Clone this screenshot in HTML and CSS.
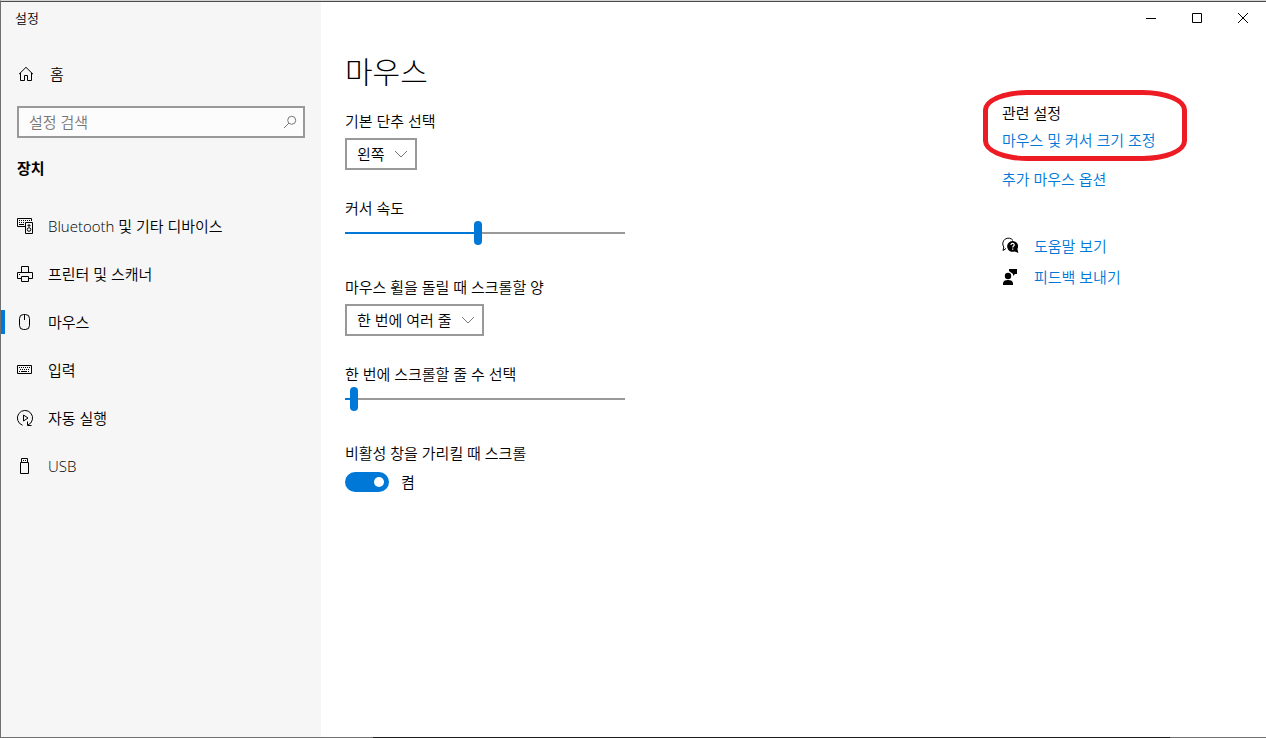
FILE: index.html
```html
<!DOCTYPE html>
<html lang="ko">
<head>
    <meta charset="UTF-8">
    <meta name="viewport" content="width=device-width, initial-scale=1">
    <title>설정</title>
    <link rel="stylesheet" href="styles.css">
</head>
<body>
    <div class="window">
        <div class="sidebar">
            <div class="app-title">설정</div>
            <a class="home" href="#home">
                <svg class="icon" width="18" height="18" viewBox="0 0 18 18"><path d="M2 9.2 9 2.3l7 6.9M3.5 8v7.5h4v-5h3v5h4V8"/></svg>
                홈
            </a>
            <form class="search">
                <input type="search" placeholder="설정 검색" aria-label="설정 검색">
                <button type="submit" aria-label="검색">
                    <svg class="icon" width="14" height="14" viewBox="0 0 14 14"><circle cx="8.7" cy="5.3" r="4"/><path d="M5.8 8.2 1 13"/></svg>
                </button>
            </form>
            <h2>장치</h2>
            <nav>
                <a href="#bluetooth">
                    <svg class="icon" width="18" height="18" viewBox="0 0 18 18"><path d="M9 9.500H1.500v-8h14V4M3 3.500h1m1 0h1m1 0h1m1 0h1m1 0h1m1 0h1M3 5.500h1m1 0h1m1 0h1M3 7.500h5M9.500 5.500h7v11h-7z"/><circle cx="13" cy="12.500" r="1.800"/><path d="M12 8h2v1h-2z"/></svg>
                    Bluetooth 및 기타 디바이스
                </a>
                <a href="#printers">
                    <svg class="icon" width="18" height="18" viewBox="0 0 18 18"><path d="M5.500 7.500v-6h7v6M5.500 13.500h-4v-6h15v6h-4M5.500 11.500h7v5h-7zM3 9.500h1"/></svg>
                    프린터 및 스캐너
                </a>
                <a class="active" href="#mouse" aria-current="page">
                    <svg class="icon" width="18" height="18" viewBox="0 0 18 18"><rect x="3.500" y="1.500" width="10" height="15" rx="4"/><path d="M8.500 2v5"/></svg>
                    마우스
                </a>
                <a href="#typing">
                    <svg class="icon" width="18" height="18" viewBox="0 0 18 18"><path d="M1.500 4.500h14v8h-14zM3 6.500h1m1 0h1m1 0h1m1 0h1m1 0h1m1 0h1M4 8.500h1m1 0h1m1 0h1m1 0h1m1 0h1M3 10.500h1m1 0h6m1 0h1"/></svg>
                    입력
                </a>
                <a href="#autoplay">
                    <svg class="icon" width="18" height="18" viewBox="0 0 18 18"><path d="M6.500 16.200a7.600 7.600 0 1 1 5.500-.2M15.500 16.500h-4v-4M7.500 6v6l4.500-3z"/></svg>
                    자동 실행
                </a>
                <a href="#usb">
                    <svg class="icon" width="18" height="18" viewBox="0 0 18 18"><path d="M5.500 5.500v-4h6v4M4.500 5.500h8v11h-8zM7 3.500h1m1 0h1"/></svg>
                    USB
                </a>
            </nav>
        </div>

        <div class="page">
            <div class="window-controls">
                <button type="button" aria-label="최소화"><svg class="icon" width="12" height="12" viewBox="0 0 12 12"><path d="M1 6.500h10"/></svg></button>
                <button type="button" aria-label="최대화"><svg class="icon" width="12" height="12" viewBox="0 0 12 12"><path d="M1.500 1.500h9v9h-9z"/></svg></button>
                <button type="button" aria-label="닫기"><svg class="icon" width="12" height="12" viewBox="0 0 12 12"><path d="m1 1 10 10M11 1 1 11"/></svg></button>
            </div>

            <div class="content">
                <main>
                    <h1>마우스</h1>

                    <div class="field">
                        <label for="primary">기본 단추 선택</label>
                        <div class="select">
                            <select id="primary"><option>왼쪽</option></select>
                            <svg class="icon" width="14" height="8" viewBox="0 0 14 8"><path d="m1 1 6 6 6-6"/></svg>
                        </div>
                    </div>

                    <div class="field">
                        <label for="speed">커서 속도</label>
                        <input type="range" id="speed" min="1" max="20" value="10" style="--fill: 47%">
                    </div>

                    <div class="field">
                        <label for="wheel">마우스 휠을 돌릴 때 스크롤할 양</label>
                        <div class="select">
                            <select id="wheel"><option>한 번에 여러 줄</option></select>
                            <svg class="icon" width="14" height="8" viewBox="0 0 14 8"><path d="m1 1 6 6 6-6"/></svg>
                        </div>
                    </div>

                    <div class="field">
                        <label for="lines">한 번에 스크롤할 줄 수 선택</label>
                        <input type="range" id="lines" min="1" max="100" value="3" style="--fill: 3%">
                    </div>

                    <div class="field">
                        <label for="inactive">비활성 창을 가리킬 때 스크롤</label>
                        <div class="toggle">
                            <input type="checkbox" id="inactive" role="switch" checked>
                            <span>켬</span>
                        </div>
                    </div>
                </main>

                <aside>
                    <div class="related">
                        <h3>관련 설정</h3>
                        <a href="#cursor-size">마우스 및 커서 크기 조정</a>
                    </div>
                    <a href="#more">추가 마우스 옵션</a>
                    <div class="support">
                        <a href="#help">
                            <svg width="18" height="18" viewBox="0 0 18 18"><path d="M4 11.500 1 13.500 1.800 10A5.300 5.300 0 1 1 11 3.500" fill="none" stroke="#000"/><path d="M10.600 4a5.400 5.400 0 0 1 4.800 8l1 4-3.800-1.600A5.400 5.400 0 1 1 10.600 4z"/><path d="M9 8c0-2.200 3.400-2 3.200.1-.1 1-1.500 1-1.500 2.400m0 1v1.200" fill="none" stroke="#fff" stroke-width="1.200"/></svg>
                            도움말 보기
                        </a>
                        <a href="#feedback">
                            <svg width="18" height="18" viewBox="0 0 18 18"><circle cx="6" cy="8" r="3.200"/><path d="M1 17v-1.500C1 13 3 12 6 12s5 1 5 3.500V17zM7 1h8v5h-2l-2 2V6L7 3z"/></svg>
                            피드백 보내기
                        </a>
                    </div>
                </aside>
            </div>
        </div>
    </div>
</body>
</html>
```
FILE: styles.css
```css
* { box-sizing: border-box; }

body {
    margin: 0;
    background: #fff;
    color: #000;
    font: 350 15px/20px "Open Sans", "Noto Sans CJK KR", sans-serif;
}

h1, h2, h3 { margin: 0; }

a {
    color: #0078d7;
    text-decoration: none;
}

button, input, select {
    font: inherit;
    color: inherit;
}

button {
    padding: 0;
    border: 0;
    background: none;
}

.icon {
    flex: none;
    fill: none;
    stroke: currentColor;
}

.window {
    display: flex;
    min-height: 100vh;
    padding-bottom: 1px;
    border-top: 1px solid #d4d4d4;
    border-left: 1px solid #707070;
    background: linear-gradient(to right, #707070 29.4%, #1c1c1c 29.4%, #1c1c1c 92.4%, #707070 92.4%) bottom / 100% 1px no-repeat;
}

/* left column */
.sidebar {
    flex: none;
    width: 320px;
    border-top: 1px solid #4c4c4c;
    background: #f6f6f6;
}

.app-title {
    padding: 6px 14px;
    font-size: 13px;
}

.home {
    display: flex;
    align-items: center;
    gap: 15px;
    margin-top: 20px;
    padding: 10px 16px;
    color: #000;
}

.search {
    display: flex;
    align-items: center;
    height: 32px;
    margin: 12px 16px 20px;
    border: 2px solid #999;
    background: #fcfcfc;
    color: #767676;
}

.search input {
    flex: 1;
    min-width: 0;
    padding: 0 10px;
    border: 0;
    background: none;
}

.search input::placeholder { color: #767676; }

.search button {
    display: flex;
    padding: 6px;
}

.sidebar h2 {
    padding: 0 16px;
    font-size: 15px;
}

nav { margin-top: 24px; }

nav a {
    display: flex;
    align-items: center;
    gap: 14px;
    height: 48px;
    padding-left: 15px;
    color: #000;
}

nav .active {
    background: linear-gradient(#0078d7, #0078d7) left center / 4px 24px no-repeat;
}

/* right column */
.page {
    flex: 1;
    min-width: 0;
    border-top: 1px solid #4c4c4c;
}

.window-controls {
    display: flex;
    justify-content: flex-end;
}

.window-controls button {
    display: flex;
    align-items: center;
    justify-content: center;
    width: 46px;
    height: 32px;
}

.content {
    display: flex;
    padding-left: 24px;
}

main {
    flex: 1;
    padding-top: 18px;
}

h1 {
    margin-bottom: 19px;
    font-size: 30px;
    font-weight: 300;
    line-height: 40px;
}

.field {
    display: flex;
    flex-direction: column;
    align-items: flex-start;
    gap: 7px;
    margin-bottom: 28px;
}

.select {
    display: grid;
    align-items: center;
    color: #000;
}

.select select {
    grid-area: 1 / 1;
    height: 32px;
    padding: 0 30px 0 10px;
    border: 2px solid #999;
    border-radius: 0;
    background: #fff;
    appearance: none;
}

.select .icon {
    grid-area: 1 / 1;
    justify-self: end;
    margin-right: 9px;
    color: #767676;
    pointer-events: none;
}

input[type=range] {
    width: 280px;
    height: 24px;
    margin: -4px 0 4px;
    background: linear-gradient(to right, #0078d7 var(--fill), #999 var(--fill)) center / 100% 2px no-repeat;
    appearance: none;
}

input[type=range]::-webkit-slider-thumb {
    width: 8px;
    height: 24px;
    border-radius: 4px;
    background: #0078d7;
    appearance: none;
}

.toggle {
    display: flex;
    align-items: center;
    gap: 12px;
    padding-top: 2px;
}

.toggle input {
    display: flex;
    align-items: center;
    justify-content: flex-end;
    width: 44px;
    height: 20px;
    margin: 0;
    padding: 5px;
    border-radius: 10px;
    background: #0078d7;
    appearance: none;
}

.toggle input::before {
    content: "";
    width: 10px;
    height: 10px;
    border-radius: 5px;
    background: #fff;
}

aside {
    flex: none;
    width: 264px;
    padding-top: 69px;
}

.related {
    position: relative;
    margin-bottom: 19px;
}

.related h3 {
    margin-bottom: 7px;
    font-size: 15px;
    font-weight: inherit;
}

/* hand-drawn style highlight round the related settings */
.related::after {
    content: "";
    position: absolute;
    inset: -13px 79px -11px -19px;
    border: 5px solid #ed1c24;
    border-radius: 44px / 20px;
    pointer-events: none;
}

.support {
    display: grid;
    gap: 11px;
    margin-top: 47px;
}

.support a {
    display: flex;
    align-items: center;
    gap: 14px;
}
```
